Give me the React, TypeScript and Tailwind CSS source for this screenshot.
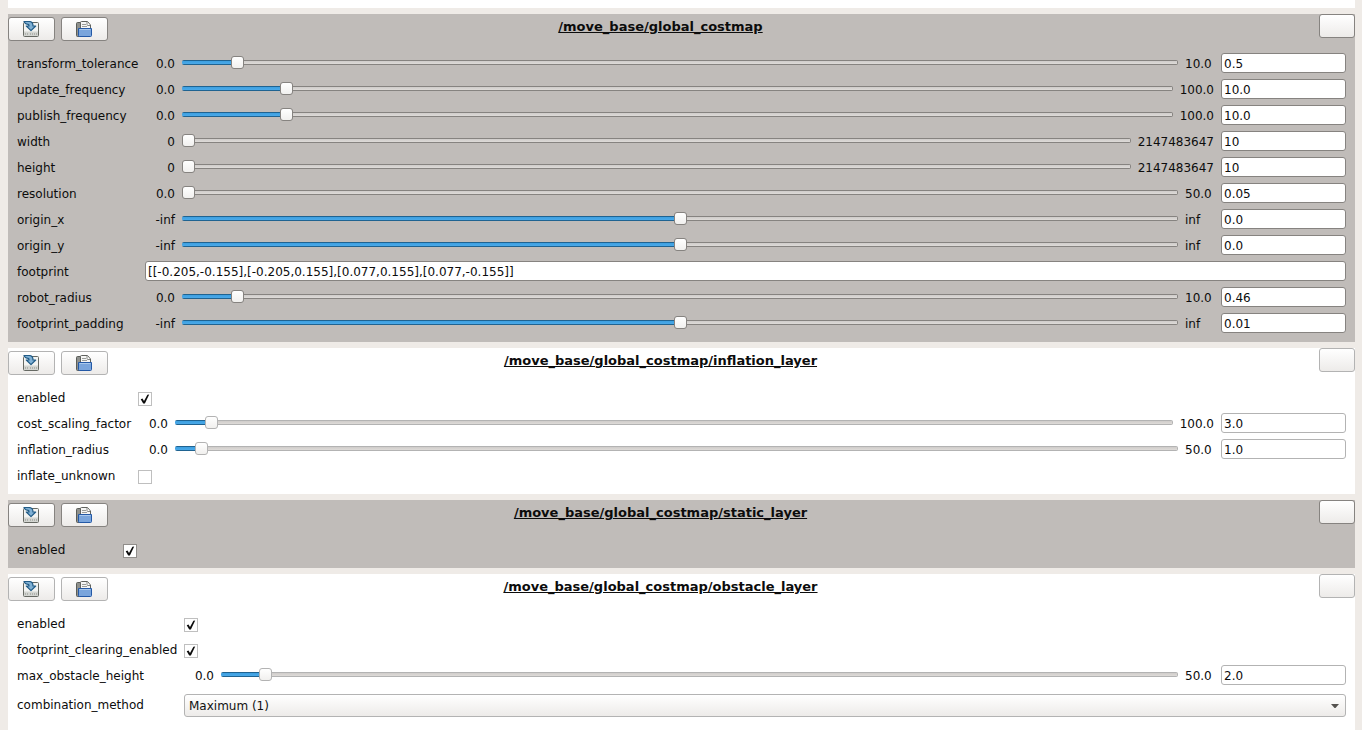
import React, { useId, useState } from "react";

type Slider = { kind: "slider"; name: string; min: string; max: string; value: string; position: number };
type Check = { kind: "check"; name: string; checked: boolean };
type Text = { kind: "text"; name: string; value: string };
type Choice = { kind: "choice"; name: string; options: string[] };
type Param = Slider | Check | Text | Choice;

type Group = { title: string; tone: string; labels: string; params: Param[] };

const dark = "bg-[#c0bcb9] [--edge:#868380]";
const light = "bg-white [--edge:#b3b3b3]";

const slider = (name: string, min: string, max: string, value: string, position: number): Slider => ({
  kind: "slider", name, min, max, value, position,
});

const groups: Group[] = [
  {
    title: "/move_base/global_costmap",
    tone: dark,
    labels: "w-32",
    params: [
      slider("transform_tolerance", "0.0", "10.0", "0.5", 50),
      slider("update_frequency", "0.0", "100.0", "10.0", 100),
      slider("publish_frequency", "0.0", "100.0", "10.0", 100),
      slider("width", "0", "2147483647", "10", 0),
      slider("height", "0", "2147483647", "10", 0),
      slider("resolution", "0.0", "50.0", "0.05", 0),
      slider("origin_x", "-inf", "inf", "0.0", 500),
      slider("origin_y", "-inf", "inf", "0.0", 500),
      { kind: "text", name: "footprint", value: "[[-0.205,-0.155],[-0.205,0.155],[0.077,0.155],[0.077,-0.155]]" },
      slider("robot_radius", "0.0", "10.0", "0.46", 50),
      slider("footprint_padding", "-inf", "inf", "0.01", 500),
    ],
  },
  {
    title: "/move_base/global_costmap/inflation_layer",
    tone: light,
    labels: "w-[121px]",
    params: [
      { kind: "check", name: "enabled", checked: true },
      slider("cost_scaling_factor", "0.0", "100.0", "3.0", 30),
      slider("inflation_radius", "0.0", "50.0", "1.0", 20),
      { kind: "check", name: "inflate_unknown", checked: false },
    ],
  },
  {
    title: "/move_base/global_costmap/static_layer",
    tone: dark,
    labels: "w-[106px]",
    params: [{ kind: "check", name: "enabled", checked: true }],
  },
  {
    title: "/move_base/global_costmap/obstacle_layer",
    tone: light,
    labels: "w-[167px]",
    params: [
      { kind: "check", name: "enabled", checked: true },
      { kind: "check", name: "footprint_clearing_enabled", checked: true },
      slider("max_obstacle_height", "0.0", "50.0", "2.0", 40),
      { kind: "choice", name: "combination_method", options: ["Maximum (1)", "Overwrite (0)"] },
    ],
  },
];

const raised = "rounded-[3px] border border-(--edge) bg-linear-to-b from-white to-[#edebe9]";
const field = "h-5 rounded-[3px] border border-(--edge) bg-white px-0.5 pt-px outline-none";

const range = [
  "h-[13px] min-w-0 flex-1 appearance-none bg-transparent",
  "[&::-webkit-slider-runnable-track]:h-[5px]",
  "[&::-webkit-slider-runnable-track]:rounded-[2px]",
  "[&::-webkit-slider-runnable-track]:bg-(--edge)",
  "[&::-webkit-slider-runnable-track]:bg-[image:linear-gradient(#1f6391_1px,#3d9fe0_1px,#4aa9e8_4px,#1f6391_4px),linear-gradient(#cfccca,#dedbd8)]",
  "[&::-webkit-slider-runnable-track]:bg-[size:var(--fill)_100%,calc(100%-2px)_3px]",
  "[&::-webkit-slider-runnable-track]:bg-[position:0_0,1px_1px]",
  "[&::-webkit-slider-runnable-track]:bg-no-repeat",
  "[&::-webkit-slider-thumb]:-mt-1",
  "[&::-webkit-slider-thumb]:size-[13px]",
  "[&::-webkit-slider-thumb]:appearance-none",
  "[&::-webkit-slider-thumb]:rounded-[3px]",
  "[&::-webkit-slider-thumb]:border",
  "[&::-webkit-slider-thumb]:border-(--edge)",
  "[&::-webkit-slider-thumb]:bg-linear-to-b",
  "[&::-webkit-slider-thumb]:from-white",
  "[&::-webkit-slider-thumb]:to-[#f1f0ee]",
].join(" ");

function SaveIcon() {
  return (
    <svg viewBox="0 0 16 16" className="size-4" aria-hidden="true">
      <path d="M1.500 1.500h13q1 0 1 1v12q0 1-1 1h-13q-1 0-1-1v-12q0-1 1-1z" fill="#f3f4f2" stroke="#666963" />
      <path d="M1 10.500h14V15H1z" fill="#d3d5d1" />
      <path d="M2.500 12v2M4.500 12v2M7.500 12v2M9.500 12v2M11.500 12v2M13.500 12v2" stroke="#b0b2ad" />
      <path d="M1 .5h5q4 0 4 4.500h2.700L8 9.600 3.300 5H6Q6 3.200 4 3.200 2.200 3.200 1 .5z" fill="#7fb0d4" stroke="#215b86" strokeWidth="1.200" strokeLinejoin="round" />
    </svg>
  );
}

function OpenIcon() {
  return (
    <svg viewBox="0 0 16 16" className="size-4" aria-hidden="true">
      <path d="M1.500 1.500H5v14H1.500q-1 0-1-1v-12q0-1 1-1z" fill="#8f918d" stroke="#5a5c58" />
      <path d="M4.500 12V1.500q0-1 1-1h6l3 3.500v8z" fill="#f6f6f5" stroke="#60625e" />
      <path d="M11 1v2.500q0 1 1 1h2" fill="#fff" stroke="#868884" />
      <path d="M6 3.500h4M6 5.500h5" stroke="#9b9d99" />
      <path d="M2.500 7.500h13v7q0 1-1 1h-11q-1 0-1-1z" fill="#7aa5dc" stroke="#2459a6" />
      <path d="M3.500 8.500h11" stroke="#a9c8ec" />
    </svg>
  );
}

function Tick({ checked, id }: { checked: boolean; id: string }) {
  return (
    <span className="mt-[5px] grid size-3.5 self-start">
      <input
        id={id}
        type="checkbox"
        defaultChecked={checked}
        className="peer col-start-1 row-start-1 size-3.5 appearance-none border border-black/25 bg-white bg-clip-padding"
      />
      <svg viewBox="0 0 14 14" className="pointer-events-none invisible col-start-1 row-start-1 size-3.5 peer-checked:visible" aria-hidden="true">
        <path d="M2.700 7.200 4.500 6.600 6 9 9.400 2.700 11.200 2.500 6.900 11.500H5.200z" fill="#0c0c0c" />
      </svg>
    </span>
  );
}

function SliderField({ param, id }: { param: Slider; id: string }) {
  const [position, setPosition] = useState(param.position);
  const share = position / 1000;
  const style = { "--fill": `calc(6px + (100% - 13px) * ${share})` } as React.CSSProperties;
  return (
    <>
      <span className="min-w-[30px] pt-px text-right">{param.min}</span>
      <input
        type="range"
        aria-label={param.name}
        min={0}
        max={1000}
        value={position}
        onChange={(e) => setPosition(Number(e.target.value))}
        className={`${range} mx-[7px] mb-px`}
        style={style}
      />
      <span className="mr-[7px] min-w-[29px] pt-px">{param.max}</span>
      <input id={id} type="text" defaultValue={param.value} className={`${field} w-[125px]`} />
    </>
  );
}

function Row({ param, labels }: { param: Param; labels: string }) {
  const id = useId();
  const choice = param.kind === "choice";
  return (
    <div className={`flex items-center ${choice ? "pt-[3px]" : "h-5"}`}>
      <label htmlFor={id} className={`${labels} shrink-0 ${choice ? "pb-0.5" : "pt-0.5"}`}>{param.name}</label>
      {param.kind === "slider" && <SliderField param={param} id={id} />}
      {param.kind === "check" && <Tick checked={param.checked} id={id} />}
      {param.kind === "text" && <input id={id} type="text" defaultValue={param.value} className={`${field} min-w-0 flex-1`} />}
      {param.kind === "choice" && (
        <span className="grid flex-1 items-center">
          <select id={id} className={`${raised} col-start-1 row-start-1 h-[23px] w-full appearance-none px-1 text-[#111]`}>
            {param.options.map((o) => <option key={o}>{o}</option>)}
          </select>
          <svg viewBox="0 0 8 4" className="pointer-events-none col-start-1 row-start-1 mr-[7px] h-1 w-2 justify-self-end" aria-hidden="true">
            <path d="M0 0h8L4.500 4h-1z" fill="#55524f" />
          </svg>
        </span>
      )}
    </div>
  );
}

function Panel({ group }: { group: Group }) {
  return (
    <section className={group.tone}>
      <header className="grid h-[27px] grid-cols-[1fr_auto_1fr_36px] gap-1.5">
        <div className="flex gap-1.5 pt-[3px]">
          <button type="button" aria-label="Save parameters" className={`${raised} flex h-6 w-[47px] items-center justify-center pr-px`}>
            <SaveIcon />
          </button>
          <button type="button" aria-label="Load parameters" className={`${raised} flex h-6 w-[47px] items-center justify-center pr-px`}>
            <OpenIcon />
          </button>
        </div>
        <h2 className="text-[13px] leading-[26px] font-bold underline">{group.title}</h2>
        <button type="button" aria-label="Close group" className={`${raised} col-start-4 h-6`} />
      </header>
      <div className="flex flex-col gap-1.5 px-[9px] pt-3 pb-[9px]">
        {group.params.map((p) => <Row key={p.name} param={p} labels={group.labels} />)}
      </div>
    </section>
  );
}

export default function App() {
  return (
    <main className="flex h-screen flex-col gap-1.5 overflow-hidden bg-[#efebe7] pr-[7px] pl-2 font-['DejaVu_Sans',sans-serif] text-[12px] leading-5 text-[#0c0c0c] [&>*]:shrink-0">
      <div className="h-2 bg-white" />
      {groups.map((g) => <Panel key={g.title} group={g} />)}
      <div className="-mt-1.5 min-h-4 flex-1 bg-white" />
    </main>
  );
}
